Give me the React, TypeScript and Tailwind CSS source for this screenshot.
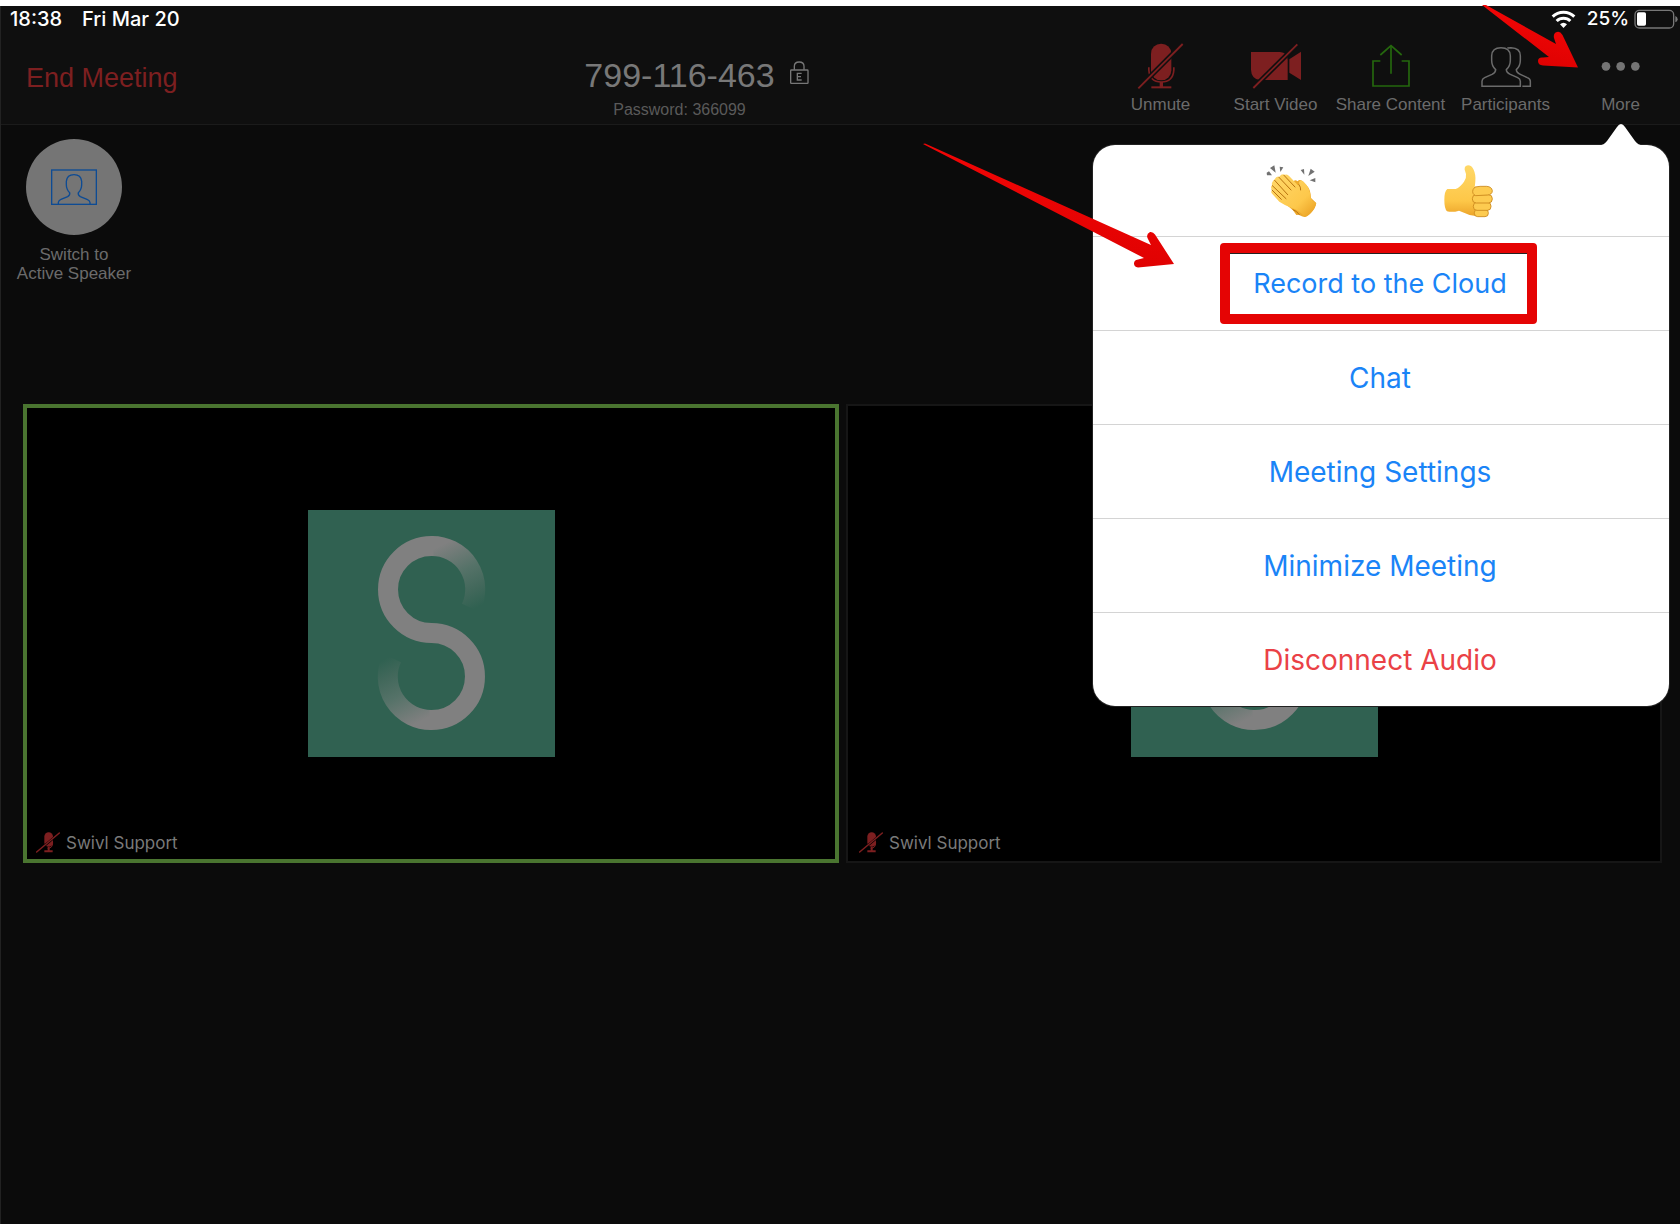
import type { ReactNode } from "react";

const MENU = [
  { label: "Record to the Cloud", tone: "text-[27px] text-[#1a84f7]" },
  { label: "Chat", tone: "text-[28px] text-[#1a84f7]" },
  { label: "Meeting Settings", tone: "text-[28px] text-[#1a84f7]" },
  { label: "Minimize Meeting", tone: "text-[28px] text-[#1a84f7]" },
  { label: "Disconnect Audio", tone: "text-[28px] text-[#ea4146]" },
];

const PEOPLE = [
  { id: "left", name: "Swivl Support", speaking: true },
  { id: "right", name: "Swivl Support", speaking: false },
];

function WifiIcon() {
  return (
    <svg viewBox="456 27 75 57" className="h-[19px] w-[25px]" fill="none" stroke="#fff" strokeWidth="9">
      <path d="M461 47 A46 46 0 0 1 526 47" />
      <path d="M473 60 A29 29 0 0 1 514 60" />
      <path d="M483 70 Q493.500 61 504 70 L493.500 81 Z" fill="#fff" stroke="none" />
    </svg>
  );
}

function BatteryIcon() {
  return (
    <svg viewBox="702 27 132 60" className="h-5 w-11">
      <rect x="705" y="31" width="116" height="53" rx="13" fill="none" stroke="#777" strokeWidth="4" />
      <rect x="711" y="37" width="27" height="40" rx="5" fill="#fff" />
      <path d="M826 48 Q833 51 833 57.500 Q833 64 826 67 Z" fill="#777" />
    </svg>
  );
}

function LockIcon() {
  return (
    <svg viewBox="690 66 57 69" className="h-[23px] w-[19px]">
      <rect x="692" y="93" width="52" height="40" rx="2" fill="none" stroke="#777" strokeWidth="4" />
      <path d="M703 92 V82 Q703 69 717.500 69 Q732 69 732 82 V92" fill="none" stroke="#777" strokeWidth="4" />
      <path d="M725 103 H712 V123 H725 M712 113 H723" fill="none" stroke="#777" strokeWidth="4" />
    </svg>
  );
}

function MicOffIcon() {
  return (
    <svg viewBox="96 126 168 150" className="h-[50px] w-14" fill="none" stroke="#7d1f20">
      <rect x="150" y="134" width="61" height="110" rx="30" fill="#7d1f20" stroke="none" />
      <path d="M143.500 205 V213 Q146 249 181 249 Q216 249 218.500 213 V205" strokeWidth="5" />
      <path d="M181 249 V264" strokeWidth="10" />
      <path d="M151 265 H211" strokeWidth="6" />
      <path d="M110 270 L247 133" stroke="#0f0f0f" strokeWidth="15" />
      <path d="M112 268 L245 135" strokeWidth="5.500" />
    </svg>
  );
}

function VideoOffIcon() {
  return (
    <svg viewBox="442 126 168 150" className="h-[50px] w-14" fill="#7d1f20">
      <path d="M451 159 H538 Q561 160 561 184 V243 H478 Q452 240 451 212 Z" />
      <path d="M566 181 L601 158 V243 L566 221 Z" />
      <path d="M456 269 L592 134" stroke="#0f0f0f" strokeWidth="15" />
      <path d="M458 267 L590 136" stroke="#7d1f20" strokeWidth="5.500" />
    </svg>
  );
}

function ShareIcon() {
  return (
    <svg viewBox="786 126 168 150" className="h-[50px] w-14" fill="none" stroke="#25680e" strokeWidth="5">
      <path d="M838 186 H816 V261 H924 V186 H902" />
      <path d="M870 224 V141" />
      <path d="M838 168 L870 140 L902 168" />
    </svg>
  );
}

function ParticipantsIcon() {
  return (
    <svg viewBox="234 126 168 150" className="h-[50px] w-14" fill="none" stroke="#6b6b6b" strokeWidth="4.500">
      <path d="M246 262 V247 Q246 240 254 236 L276 226 Q287 220 287 212 Q275 202 275 184 V170 Q276 146 303 146 Q330 146 331 170 V184 Q331 202 319 212 Q319 220 331 226 L353 236 Q361 240 361 247 V262 Z" />
      <path d="M322 147 Q327 146 333 146 Q361 147 361 170 V184 Q361 202 349 212 Q349 220 361 226 L382 236 Q391 240 391 247 V262 H367" />
    </svg>
  );
}

function MoreIcon() {
  return (
    <svg viewBox="578 126 168 150" className="h-[50px] w-14" fill="#747474">
      <circle cx="617" cy="202" r="13" />
      <circle cx="661" cy="202" r="13" />
      <circle cx="705" cy="202" r="13" />
    </svg>
  );
}

function SpeakerIcon() {
  return (
    <svg viewBox="153 506 138 108" className="h-9 w-[46px]" fill="none" stroke="#0d4b94" strokeWidth="4">
      <rect x="155" y="509" width="134" height="103" />
      <path d="M175 611 V606 Q176 600 183 597 L203 589 Q211 584 209 577 Q199 567 199 553 V543 Q201 523 222 523 Q243 523 245 543 V553 Q245 567 235 577 Q233 584 241 589 L261 597 Q269 600 270 606 V611" />
    </svg>
  );
}

function SmallMicOffIcon() {
  return (
    <svg viewBox="108 100 72 63" className="h-[21px] w-6" fill="#7d1f20">
      <rect x="133" y="101" width="26" height="43" rx="13" />
      <path d="M133 155 H158 V161 H133 Z M143 145 H149 V158 H143 Z" />
      <path d="M158 132 Q158 149 143 149" fill="none" stroke="#7d1f20" strokeWidth="3" />
      <path d="M108 162 L180 102" stroke="#000" strokeWidth="7" />
      <path d="M110 160 L178 103" stroke="#7d1f20" strokeWidth="4.500" strokeLinecap="round" />
    </svg>
  );
}

function SwivlLogo({ id }: { id: string }) {
  const fade = `fade-${id}`;
  return (
    <svg viewBox="0 0 247 247" className="size-[247px] bg-[#306151]" fill="none" strokeWidth="20" role="img" aria-label="Swivl">
      <defs>
        {/* one gradient per end of the S, bright near the bend and gone at the tip */}
        <linearGradient id={fade} gradientUnits="userSpaceOnUse" x1="136" y1="34" x2="168" y2="98">
          <stop offset="0" stopColor="#808080" />
          <stop offset="0.450" stopColor="#557268" />
          <stop offset="0.750" stopColor="#42685b" />
          <stop offset="1" stopColor="#306151" />
        </linearGradient>
      </defs>
      <path d="M123.500 36 A43.300 43.300 0 0 1 163 98" stroke={`url(#${fade})`} />
      <path d="M123.500 36 A43.300 43.300 0 0 1 163 98" stroke={`url(#${fade})`} transform="rotate(180 123.500 123)" />
      <path
        d="M125.500 36 H123.500 A43.300 43.300 0 0 0 123.500 123 A43.300 43.300 0 0 1 123.500 210 H121.500"
        stroke="#808080"
      />
    </svg>
  );
}

function ClapIcon() {
  return (
    <svg viewBox="200 74 156 162" className="h-[54px] w-[52px]" aria-hidden="true">
      <defs>
        <linearGradient id="clap-skin" x1="0" y1="0" x2="1" y2="1">
          <stop offset="0" stopColor="#ffd86b" />
          <stop offset="0.650" stopColor="#fdc84b" />
          <stop offset="1" stopColor="#e79a1c" />
        </linearGradient>
      </defs>
      <g fill="#717171">
        <path d="M212 86 L225 78 L229 100 Z" />
        <path d="M202 100 L209 96 L218 108 L203 108 Z" />
        <path d="M241 82 L252 84 L243 98 Z" />
        <path d="M304 92 L314 89 L315 106 Z" />
        <path d="M334 88 L346 97 L327 110 Z" />
        <path d="M348 116 L348 129 L331 123 Z" />
      </g>
      <path
        d="M281 128 Q286 118 295 126 Q300 118 309 125 L326 143 Q334 153 335 176 L350 190 Q352 196 342 211 Q329 231 315 233 Q307 232 300 226 L291 227 L281 213 L225 166 Z"
        fill="#eda92b"
      />
      <path
        d="M226 120 Q231 109 240 112 Q247 102 257 106 Q264 103 270 111 L296 138 Q302 138 299 128 Q303 119 313 127 Q333 145 334 176 Q340 187 351 192 Q345 220 317 233 Q300 214 277 206 Q255 197 240 187 L219 164 Q213 158 218 151 Q212 144 218 138 Q215 130 226 120 Z"
        fill="url(#clap-skin)"
      />
      <g fill="none" stroke="#b8720f" strokeWidth="3" strokeLinecap="round">
        <path d="M254 108 L287 143" />
        <path d="M239 114 L275 152" />
        <path d="M226 123 L265 166" />
        <path d="M219 139 L260 178" />
        <path d="M218 152 L246 180" />
        <path d="M299 136 Q305 143 304 152" />
        <path d="M281 211 Q292 214 301 227" />
      </g>
    </svg>
  );
}

function ThumbIcon() {
  return (
    <svg viewBox="724 74 156 162" className="h-[54px] w-[52px]" aria-hidden="true">
      <defs>
        <linearGradient id="thumb-skin" x1="0" y1="0" x2="0" y2="1">
          <stop offset="0" stopColor="#ffd867" />
          <stop offset="0.700" stopColor="#fdc748" />
          <stop offset="1" stopColor="#eca42a" />
        </linearGradient>
      </defs>
      <path
        d="M740 149 H765 Q779 143 790 127 Q798 116 796 104 L792 91 Q791 79 802 78 Q813 78 819 91 Q826 106 824 126 L822 146 L838 160 L848 222 Q841 232 825 230 Q807 229 790 220 L775 214 Q756 220 739 216 Q731 208 731 182 Q731 155 740 149 Z"
        fill="url(#thumb-skin)"
      />
      <g fill="#fdcb50" stroke="#c9851a" strokeWidth="2.500">
        <rect x="821" y="210" width="42" height="22" rx="10" />
        <rect x="818" y="189" width="53" height="24" rx="11" />
        <rect x="815" y="166" width="60" height="25" rx="12" />
        <path d="M823 143 Q836 140 858 141 Q873 142 875 154 Q875 166 860 167 L825 169 Q813 164 817 151 Z" />
      </g>
    </svg>
  );
}

function ToolButton({ label, children }: { label: string; children: ReactNode }) {
  return (
    <button type="button" className="flex w-[115px] flex-col items-center gap-1 whitespace-nowrap text-[17px] leading-5 text-[#6b6b6b]">
      {children}
      {label}
    </button>
  );
}

function MoreMenu() {
  return (
    <div className="absolute right-[11px] top-[145px] w-[576px] font-['Inter',sans-serif]">
      <svg viewBox="0 0 44 24" className="absolute -top-[22px] right-[26px] h-6 w-11" fill="#fff">
        <path d="M0 24 V22.500 Q5 22 8 18 L18 4 Q22 -2 26 4 L36 18 Q39 22 44 22.500 V24 Z" />
      </svg>
      <div role="menu" className="overflow-hidden rounded-[22px] bg-white ring-1 ring-[#222]">
        <div className="flex h-[91px] items-center justify-center gap-[124px] pr-0.5">
          <button type="button" aria-label="Clap">
            <ClapIcon />
          </button>
          <button type="button" aria-label="Thumbs up">
            <ThumbIcon />
          </button>
        </div>
        {MENU.map((item) => (
          <button
            key={item.label}
            type="button"
            role="menuitem"
            className={`flex h-[94px] w-full items-center justify-center border-t border-[#d4d4d4] pr-0.5 leading-8 ${item.tone}`}
          >
            {item.label}
          </button>
        ))}
      </div>
      <div className="pointer-events-none absolute left-[127px] top-[98px] h-[81px] w-[317px] rounded border-[10px] border-[#e50404]">
        <div className="h-px bg-[#222]" />
      </div>
    </div>
  );
}

function Arrows() {
  return (
    <div className="pointer-events-none">
      <svg viewBox="1480 4 100 68" className="absolute right-[100px] top-1 h-[68px] w-[100px]">
        <defs>
          <linearGradient id="arrow-red" x1="0" y1="1" x2="0.300" y2="0">
            <stop offset="0" stopColor="#d90000" />
            <stop offset="1" stopColor="#f40606" />
          </linearGradient>
        </defs>
        <path
          d="M1482 5 L1486 5 L1556 44 L1554 38 Q1553 33 1557 32 Q1560 31 1562.500 35 L1578 67.500 L1543 65.500 Q1538 65 1538 61 Q1538 57 1543 57.500 L1549 57 Z"
          fill="url(#arrow-red)"
        />
      </svg>
      <svg viewBox="920 140 260 132" className="absolute right-[500px] top-[140px] h-[132px] w-[260px]">
        <path
          d="M923 144 L925 143.500 L1151 245 L1147.500 238 Q1146 234 1150 232 Q1153 231.500 1155 234.500 L1174 264 L1138 267.500 Q1134 267 1134 263.500 Q1134 260 1138 259.500 L1144 258 Z"
          fill="url(#arrow-red)"
        />
      </svg>
    </div>
  );
}

export default function App() {
  return (
    <div className="relative min-h-screen border-t-[6px] border-white bg-[#0b0b0b] font-['Liberation_Sans',Arial,sans-serif]">
      <div className="absolute inset-y-0 left-0 w-px bg-[#222]" />
      <header className="border-b border-[#1b1b1b] bg-[#0f0f0f]">
        <div className="flex h-[26px] items-center pl-2.5 pr-0.5 font-['Inter',sans-serif] text-xl font-medium leading-6 text-white">
          <span>18:38</span>
          <span className="ml-5">Fri Mar 20</span>
          <span className="ml-auto flex items-center gap-[5px]">
            <WifiIcon />
            <span className="ml-1.5 text-[19px]">25%</span>
            <BatteryIcon />
          </span>
        </div>

        <div className="flex h-[92px] items-start pr-0.5 pt-[9px]">
          <div className="w-64 pl-[26px] pt-[21px]">
            <button type="button" className="text-[27px] leading-8 text-[#7d1f20]">
              End Meeting
            </button>
          </div>
          <div className="flex flex-1 flex-col items-center pt-3">
            <h1 className="flex items-start gap-[15px] pl-[34px] text-[34px] leading-[45px] text-[#787878]">
              799-116-463
              <span className="pt-2">
                <LockIcon />
              </span>
            </h1>
            <p className="text-base leading-6 text-[#5a5a5a]">Password: 366099</p>
          </div>
          <nav className="flex">
            <ToolButton label="Unmute">
              <MicOffIcon />
            </ToolButton>
            <ToolButton label="Start Video">
              <VideoOffIcon />
            </ToolButton>
            <ToolButton label="Share Content">
              <ShareIcon />
            </ToolButton>
            <ToolButton label="Participants">
              <ParticipantsIcon />
            </ToolButton>
            <ToolButton label="More">
              <MoreIcon />
            </ToolButton>
          </nav>
        </div>
      </header>

      <main className="pt-3.5">
        <button type="button" className="flex w-[148px] flex-col items-center gap-2.5 text-[17px] leading-[19px] text-[#6b6b6b]">
          <span className="flex size-24 items-center justify-center rounded-full bg-[#757575]">
            <SpeakerIcon />
          </span>
          <span>
            Switch to
            <br />
            Active Speaker
          </span>
        </button>

        <div className="mt-[121px] grid grid-cols-2 gap-[7px] pl-[23px] pr-[18px]">
          {PEOPLE.map((p) => (
            <figure
              key={p.id}
              className={`relative flex aspect-video items-center justify-center bg-black ${
                p.speaking ? "border-4 border-[#4a7530]" : "border-2 border-[#161616]"
              }`}
            >
              <SwivlLogo id={p.id} />
              <figcaption
                className={`absolute flex items-center gap-1.5 font-['Inter',sans-serif] text-[17px] leading-5 text-[#7a7a7a] ${
                  p.speaking ? "bottom-1.5 left-[9px]" : "bottom-2 left-[11px]"
                }`}
              >
                <SmallMicOffIcon />
                {p.name}
              </figcaption>
            </figure>
          ))}
        </div>
      </main>

      <div className="absolute inset-x-0 -top-1.5">
        <MoreMenu />
        <Arrows />
      </div>
    </div>
  );
}
